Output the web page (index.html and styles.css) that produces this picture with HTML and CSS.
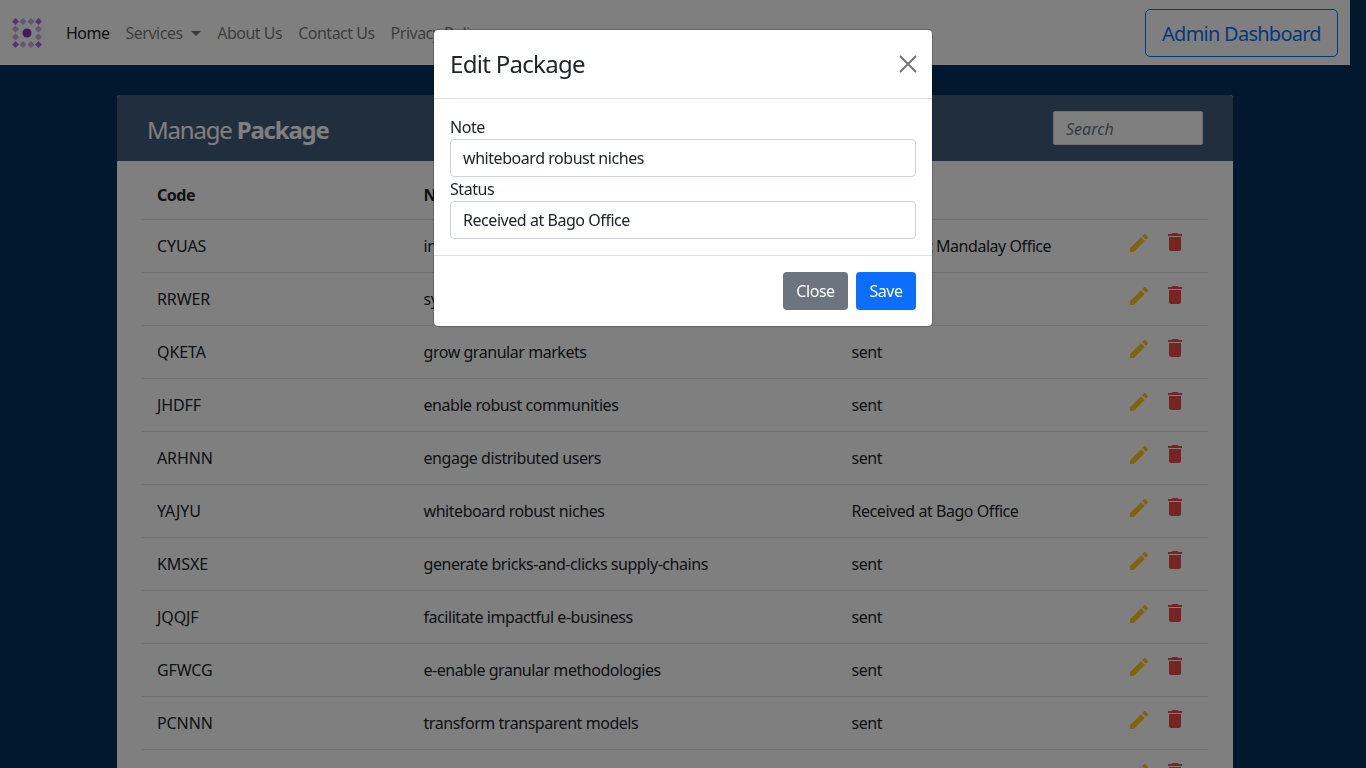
FILE: index.html
```html
<!DOCTYPE html>
<html lang="en">
<head>
<meta charset="utf-8">
<title>Manage Package</title>
<link rel="stylesheet" href="styles.css">
</head>
<body>
<nav class="navbar">
  <svg class="logo" width="30" height="30" viewBox="0 0 30 30" aria-hidden="true">
    <g class="dia-strong">
      <path d="M3.5 0l3.5 3.5-3.5 3.5L0 3.5z"/><path d="M26.5 0l3.5 3.5-3.5 3.5L23 3.5z"/>
      <path d="M3.5 23l3.5 3.5-3.5 3.5L0 26.5z"/><path d="M26.5 23l3.5 3.5-3.5 3.5L23 26.5z"/>
    </g>
    <g class="dia-soft">
      <path d="M11 0l3.5 3.5L11 7 7.500 3.500z"/><path d="M19 0l3.500 3.500L19 7l-3.500-3.500z"/>
      <path d="M11 23l3.500 3.500L11 30l-3.500-3.500z"/><path d="M19 23l3.500 3.500L19 30l-3.500-3.500z"/>
      <path d="M3.500 7.500L7 11l-3.500 3.500L0 11z"/><path d="M3.500 15.500L7 19l-3.500 3.500L0 19z"/>
      <path d="M26.500 7.500L30 11l-3.500 3.500L23 11z"/><path d="M26.500 15.500L30 19l-3.500 3.500L23 19z"/>
    </g>
    <circle class="dia-core" cx="15" cy="15" r="4.500"/>
  </svg>
  <ul class="nav-links">
    <li class="nav-link active">Home</li>
    <li class="nav-link">Services <span class="caret"></span></li>
    <li class="nav-link">About Us</li>
    <li class="nav-link">Contact Us</li>
    <li class="nav-link">Privacy Policy</li>
  </ul>
  <button class="btn-admin">Admin Dashboard</button>
</nav>

<main class="container">
  <div class="card">
    <div class="card-title">
      <h2 class="title-text">Manage <b>Package</b></h2>
      <input class="search" type="text" placeholder="Search">
    </div>
    <table class="table">
      <colgroup>
        <col class="c1"><col class="c2"><col class="c3"><col class="c4">
      </colgroup>
      <thead>
        <tr><th>Code</th><th>Note</th><th>Status</th><th></th></tr>
      </thead>
      <tbody>
        <tr><td class="code">CYUAS</td><td>incubate viral platforms</td><td>Received at Mandalay Office</td><td><div class="acts"><svg class="ic edit" viewBox="0 0 24 24"><path d="M3 17.250V21h3.750L17.810 9.940l-3.750-3.750L3 17.250zM20.710 7.040c.39-.39.39-1.020 0-1.410l-2.340-2.340c-.39-.39-1.020-.39-1.410 0l-1.830 1.830 3.750 3.750 1.830-1.830z"/></svg><svg class="ic del" viewBox="0 0 24 24"><path d="M6 19c0 1.100.9 2 2 2h8c1.100 0 2-.9 2-2V7H6v12zM19 4h-3.500l-1-1h-5l-1 1H5v2h14V4z"/></svg></div></td></tr>
        <tr><td class="code">RRWER</td><td>synergize sticky systems</td><td>sent</td><td><div class="acts"><svg class="ic edit" viewBox="0 0 24 24"><path d="M3 17.250V21h3.750L17.810 9.940l-3.750-3.750L3 17.250zM20.710 7.040c.39-.39.39-1.020 0-1.410l-2.340-2.340c-.39-.39-1.020-.39-1.410 0l-1.830 1.830 3.750 3.750 1.830-1.830z"/></svg><svg class="ic del" viewBox="0 0 24 24"><path d="M6 19c0 1.100.9 2 2 2h8c1.100 0 2-.9 2-2V7H6v12zM19 4h-3.500l-1-1h-5l-1 1H5v2h14V4z"/></svg></div></td></tr>
        <tr><td class="code">QKETA</td><td>grow granular markets</td><td>sent</td><td><div class="acts"><svg class="ic edit" viewBox="0 0 24 24"><path d="M3 17.250V21h3.750L17.810 9.940l-3.750-3.750L3 17.250zM20.710 7.040c.39-.39.39-1.020 0-1.410l-2.340-2.340c-.39-.39-1.020-.39-1.410 0l-1.830 1.830 3.750 3.750 1.830-1.830z"/></svg><svg class="ic del" viewBox="0 0 24 24"><path d="M6 19c0 1.100.9 2 2 2h8c1.100 0 2-.9 2-2V7H6v12zM19 4h-3.500l-1-1h-5l-1 1H5v2h14V4z"/></svg></div></td></tr>
        <tr><td class="code">JHDFF</td><td>enable robust communities</td><td>sent</td><td><div class="acts"><svg class="ic edit" viewBox="0 0 24 24"><path d="M3 17.250V21h3.750L17.810 9.940l-3.750-3.750L3 17.250zM20.710 7.040c.39-.39.39-1.020 0-1.410l-2.340-2.340c-.39-.39-1.020-.39-1.410 0l-1.830 1.830 3.750 3.750 1.830-1.830z"/></svg><svg class="ic del" viewBox="0 0 24 24"><path d="M6 19c0 1.100.9 2 2 2h8c1.100 0 2-.9 2-2V7H6v12zM19 4h-3.500l-1-1h-5l-1 1H5v2h14V4z"/></svg></div></td></tr>
        <tr><td class="code">ARHNN</td><td>engage distributed users</td><td>sent</td><td><div class="acts"><svg class="ic edit" viewBox="0 0 24 24"><path d="M3 17.250V21h3.750L17.810 9.940l-3.750-3.750L3 17.250zM20.710 7.040c.39-.39.39-1.020 0-1.410l-2.340-2.340c-.39-.39-1.020-.39-1.410 0l-1.830 1.830 3.750 3.750 1.830-1.830z"/></svg><svg class="ic del" viewBox="0 0 24 24"><path d="M6 19c0 1.100.9 2 2 2h8c1.100 0 2-.9 2-2V7H6v12zM19 4h-3.500l-1-1h-5l-1 1H5v2h14V4z"/></svg></div></td></tr>
        <tr><td class="code">YAJYU</td><td>whiteboard robust niches</td><td>Received at Bago Office</td><td><div class="acts"><svg class="ic edit" viewBox="0 0 24 24"><path d="M3 17.250V21h3.750L17.810 9.940l-3.750-3.750L3 17.250zM20.710 7.040c.39-.39.39-1.020 0-1.410l-2.340-2.340c-.39-.39-1.020-.39-1.410 0l-1.830 1.830 3.750 3.750 1.830-1.830z"/></svg><svg class="ic del" viewBox="0 0 24 24"><path d="M6 19c0 1.100.9 2 2 2h8c1.100 0 2-.9 2-2V7H6v12zM19 4h-3.500l-1-1h-5l-1 1H5v2h14V4z"/></svg></div></td></tr>
        <tr><td class="code">KMSXE</td><td>generate bricks-and-clicks supply-chains</td><td>sent</td><td><div class="acts"><svg class="ic edit" viewBox="0 0 24 24"><path d="M3 17.250V21h3.750L17.810 9.940l-3.750-3.750L3 17.250zM20.710 7.040c.39-.39.39-1.020 0-1.410l-2.340-2.340c-.39-.39-1.020-.39-1.410 0l-1.830 1.830 3.750 3.750 1.830-1.830z"/></svg><svg class="ic del" viewBox="0 0 24 24"><path d="M6 19c0 1.100.9 2 2 2h8c1.100 0 2-.9 2-2V7H6v12zM19 4h-3.500l-1-1h-5l-1 1H5v2h14V4z"/></svg></div></td></tr>
        <tr><td class="code">JQQJF</td><td>facilitate impactful e-business</td><td>sent</td><td><div class="acts"><svg class="ic edit" viewBox="0 0 24 24"><path d="M3 17.250V21h3.750L17.810 9.940l-3.750-3.750L3 17.250zM20.710 7.040c.39-.39.39-1.020 0-1.410l-2.340-2.340c-.39-.39-1.020-.39-1.410 0l-1.830 1.830 3.750 3.750 1.830-1.830z"/></svg><svg class="ic del" viewBox="0 0 24 24"><path d="M6 19c0 1.100.9 2 2 2h8c1.100 0 2-.9 2-2V7H6v12zM19 4h-3.500l-1-1h-5l-1 1H5v2h14V4z"/></svg></div></td></tr>
        <tr><td class="code">GFWCG</td><td>e-enable granular methodologies</td><td>sent</td><td><div class="acts"><svg class="ic edit" viewBox="0 0 24 24"><path d="M3 17.250V21h3.750L17.810 9.940l-3.750-3.750L3 17.250zM20.710 7.040c.39-.39.39-1.020 0-1.410l-2.340-2.340c-.39-.39-1.020-.39-1.410 0l-1.830 1.830 3.750 3.750 1.830-1.830z"/></svg><svg class="ic del" viewBox="0 0 24 24"><path d="M6 19c0 1.100.9 2 2 2h8c1.100 0 2-.9 2-2V7H6v12zM19 4h-3.500l-1-1h-5l-1 1H5v2h14V4z"/></svg></div></td></tr>
        <tr><td class="code">PCNNN</td><td>transform transparent models</td><td>sent</td><td><div class="acts"><svg class="ic edit" viewBox="0 0 24 24"><path d="M3 17.250V21h3.750L17.810 9.940l-3.750-3.750L3 17.250zM20.710 7.040c.39-.39.39-1.020 0-1.410l-2.340-2.340c-.39-.39-1.020-.39-1.410 0l-1.830 1.830 3.750 3.750 1.830-1.830z"/></svg><svg class="ic del" viewBox="0 0 24 24"><path d="M6 19c0 1.100.9 2 2 2h8c1.100 0 2-.9 2-2V7H6v12zM19 4h-3.500l-1-1h-5l-1 1H5v2h14V4z"/></svg></div></td></tr>
        <tr><td class="code">WDSAX</td><td>scale dynamic portals</td><td>sent</td><td><div class="acts"><svg class="ic edit" viewBox="0 0 24 24"><path d="M3 17.250V21h3.750L17.810 9.940l-3.750-3.750L3 17.250zM20.710 7.040c.39-.39.39-1.020 0-1.410l-2.340-2.340c-.39-.39-1.020-.39-1.410 0l-1.830 1.830 3.750 3.750 1.830-1.830z"/></svg><svg class="ic del" viewBox="0 0 24 24"><path d="M6 19c0 1.100.9 2 2 2h8c1.100 0 2-.9 2-2V7H6v12zM19 4h-3.500l-1-1h-5l-1 1H5v2h14V4z"/></svg></div></td></tr>
      </tbody>
    </table>
  </div>
</main>

<div class="backdrop"></div>

<div class="modal">
  <header class="modal-head">
    <h5 class="modal-title">Edit Package</h5>
    <svg class="close" width="20" height="20" viewBox="0 0 20 20" aria-hidden="true"><path d="M2 2l16 16M18 2L2 18"/></svg>
  </header>
  <section class="modal-body">
    <label class="field-label">Note</label>
    <input class="field" type="text" value="whiteboard robust niches">
    <label class="field-label">Status</label>
    <input class="field" type="text" value="Received at Bago Office">
  </section>
  <footer class="modal-foot">
    <button class="btn btn-close">Close</button>
    <button class="btn btn-save">Save</button>
  </footer>
</div>
</body>
</html>
```
FILE: styles.css
```css
* { box-sizing: border-box; }
html, body { height: 100%; }
body {
  margin: 0;
  padding-right: 16px;
  background: #04305f;
  color: #212529;
  font-family: "Noto Sans", sans-serif;
  font-size: 16px;
  line-height: 24px;
  letter-spacing: -0.45px;
  overflow: hidden;
}
input, button { font-family: inherit; letter-spacing: inherit; }

.navbar {
  height: 65px;
  background: #fff;
  display: flex;
  align-items: center;
  padding: 0 12px;
}
.logo { flex: none; margin-right: 16px; }
.dia-strong path { fill: #a66be0; }
.dia-soft path { fill: #c4ace0; }
.dia-core { fill: #7a3cb0; }
.nav-links {
  list-style: none;
  display: flex;
  margin: 0;
  padding: 0;
  flex: 1;
}
.nav-link {
  padding: 0 8px;
  color: rgba(0, 0, 0, .55);
  white-space: nowrap;
  letter-spacing: -0.5px;
}
.nav-link.active { color: rgba(0, 0, 0, .9); }
.caret {
  display: inline-block;
  margin-left: 5px;
  vertical-align: 3px;
  border-top: 5px solid;
  border-left: 5px solid transparent;
  border-right: 5px solid transparent;
}
.btn-admin {
  width: 193px;
  height: 48px;
  font-size: 20px;
  letter-spacing: -0.75px;
  color: #0d6efd;
  background: transparent;
  border: 1px solid #0d6efd;
  border-radius: 5px;
  padding: 2px 0 0;
}

.container { width: 1116px; margin: 30px auto 0; }
.card { background: #fff; border-radius: 3px; padding: 0 25px; }
.card-title {
  background: #435d7d;
  margin: 0 -25px;
  height: 66px;
  padding: 0 30px;
  border-radius: 3px 3px 0 0;
  display: flex;
  align-items: center;
  justify-content: space-between;
}
.title-text {
  margin: 4px 0 0;
  font-size: 24px;
  letter-spacing: -1.2px;
  font-weight: 400;
  color: #fff;
}
.title-text b { font-weight: 700; }
.search {
  width: 150px;
  height: 34px;
  border: 1px solid #ddd;
  border-radius: 2px;
  padding: 2px 12px 0;
  font-size: 16px;
  letter-spacing: 0;
  font-style: italic;
  background: #fff;
}
.search::placeholder { color: #6c757d; }

.table { width: 1066px; border-collapse: collapse; table-layout: fixed; margin-top: 6px; }
.c1 { width: 266.5px; }
.c2 { width: 428px; }
.c3 { width: 275.500px; }
.c4 { width: 96px; }
.table th, .table td {
  padding: 14px 15px;
  text-align: left;
  border-bottom: 1px solid #dee2e6;
  white-space: nowrap;
}
.table th { font-weight: 700; padding: 16px 15px 12px; }
.table .code { letter-spacing: -0.1px; }
.acts { display: flex; gap: 12px; margin-top: -3px; margin-bottom: 3px; height: 24px; }
.ic { width: 24px; height: 24px; flex: none; }
.edit { fill: #ffc61a; }
.del { fill: #ee4a48; margin-top: -1px; }

.backdrop {
  position: fixed;
  inset: 0;
  background: rgba(0, 0, 0, .5);
}

.modal {
  position: absolute;
  top: 29px;
  left: 433px;
  width: 500px;
  background: #fff;
  background-clip: padding-box;
  border: 1px solid rgba(0, 0, 0, .2);
  border-radius: 5px;
}
.modal-head {
  height: 69px;
  padding: 0 16px;
  display: flex;
  align-items: center;
  justify-content: space-between;
  border-bottom: 1px solid #dee2e6;
}
.modal-title {
  margin: 0;
  font-size: 24px;
  letter-spacing: -0.7px;
  font-weight: 400;
  line-height: 36px;
}
.close { fill: none; stroke: #777; stroke-width: 2; margin-right: -2px; }
.modal-body { padding: 16px; height: 156px; }
.field-label { display: block; line-height: 24px; height: 24px; }
.field {
  display: block;
  width: 100%;
  height: 38px;
  border: 1px solid #ced4da;
  border-radius: 4px;
  padding: 0 12px;
  font-size: 16px;
  color: #212529;
  background: #fff;
}
.modal-foot {
  height: 71px;
  border-top: 1px solid #dee2e6;
  display: flex;
  align-items: center;
  justify-content: flex-end;
  gap: 8px;
  padding: 0 16px;
}
.btn {
  height: 38px;
  border: 0;
  border-radius: 4px;
  color: #fff;
  font-size: 16px;
  padding: 0;
}
.btn-close { width: 65px; background: #6c757d; }
.btn-save { width: 60px; background: #0d6efd; }
```
